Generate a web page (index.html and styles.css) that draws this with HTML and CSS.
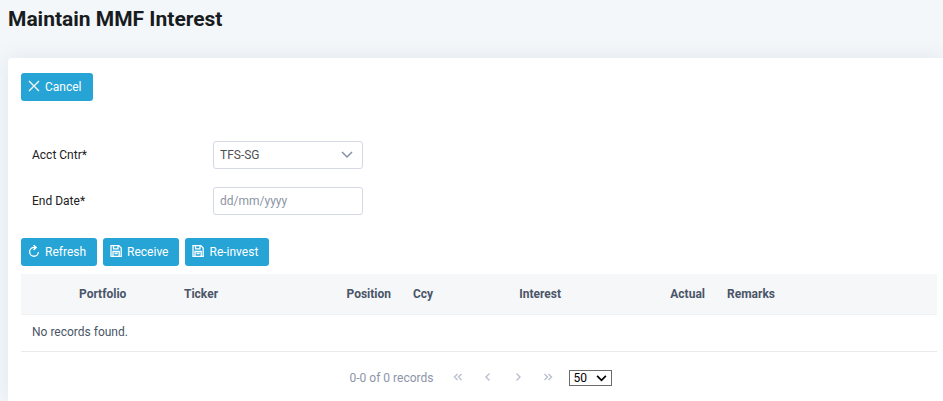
FILE: index.html
```html
<!DOCTYPE html>
<html lang="en">
<head>
<meta charset="UTF-8" />
<meta name="viewport" content="width=device-width, initial-scale=1" />
<title>Maintain MMF Interest</title>
<link rel="stylesheet" href="styles.css">
</head>
<body>
  <header class="page-header">
    <h1>Maintain MMF Interest</h1>
  </header>

  <main class="card">
    <div class="toolbar">
      <button type="button" class="btn">
        <svg class="icon" viewBox="0 0 12 12" aria-hidden="true"><path d="M1 1l10 10M11 1L1 11"/></svg>
        Cancel
      </button>
    </div>

    <form class="filters">
      <div class="field">
        <label for="acct-cntr">Acct Cntr*</label>
        <div class="select-wrap">
          <select id="acct-cntr" class="control">
            <option>TFS-SG</option>
          </select>
          <svg class="chevron" viewBox="0 0 12 8" aria-hidden="true"><path d="M1 1l5 5 5-5"/></svg>
        </div>
      </div>
      <div class="field">
        <label for="end-date">End Date*</label>
        <input type="text" id="end-date" class="control" placeholder="dd/mm/yyyy">
      </div>
    </form>

    <div class="toolbar">
      <button type="button" class="btn">
        <svg class="icon" viewBox="0 0 12 12" aria-hidden="true"><path d="M7.500 2.500H5.500A4.400 4.400 0 1 0 10.400 7M5.600 0L8.200 2.500 5.600 5"/></svg>
        Refresh
      </button>
      <button type="button" class="btn">
        <svg class="icon" viewBox="0 0 12 12" aria-hidden="true"><path d="M1 .6h7.800L11.200 3V11.400H1zM3.500 .6v3.200h4.500V.6M3 11.400V6.500h6.200v4.900M4.500 8.500h3.200"/></svg>
        Receive
      </button>
      <button type="button" class="btn">
        <svg class="icon" viewBox="0 0 12 12" aria-hidden="true"><path d="M1 .6h7.800L11.200 3V11.400H1zM3.500 .6v3.200h4.500V.6M3 11.400V6.500h6.200v4.900M4.500 8.500h3.200"/></svg>
        Re-invest
      </button>
    </div>

    <table class="records">
      <colgroup>
        <col class="col-check">
        <col class="col-portfolio">
        <col class="col-ticker">
        <col class="col-position">
        <col class="col-ccy">
        <col class="col-interest">
        <col class="col-actual">
        <col>
      </colgroup>
      <thead>
        <tr>
          <td></td>
          <th scope="col">Portfolio</th>
          <th scope="col">Ticker</th>
          <th scope="col" class="num">Position</th>
          <th scope="col">Ccy</th>
          <th scope="col" class="num">Interest</th>
          <th scope="col" class="num">Actual</th>
          <th scope="col">Remarks</th>
        </tr>
      </thead>
      <tbody>
        <tr>
          <td colspan="8">No records found.</td>
        </tr>
      </tbody>
    </table>

    <nav class="paginator" aria-label="Records pages">
      <span class="count">0-0 of 0 records</span>
      <button type="button" class="page-btn" aria-label="First page" disabled>
        <svg viewBox="0 0 10 8" aria-hidden="true"><path d="M4.500 1l-3 3 3 3M8.500 1l-3 3 3 3"/></svg>
      </button>
      <button type="button" class="page-btn" aria-label="Previous page" disabled>
        <svg viewBox="0 0 10 8" aria-hidden="true"><path d="M6.500 .5L3 4l3.500 3.500"/></svg>
      </button>
      <button type="button" class="page-btn" aria-label="Next page" disabled>
        <svg viewBox="0 0 10 8" aria-hidden="true"><path d="M3.500 .5L7 4 3.500 7.500"/></svg>
      </button>
      <button type="button" class="page-btn" aria-label="Last page" disabled>
        <svg viewBox="0 0 10 8" aria-hidden="true"><path d="M1.500 1l3 3-3 3M5.500 1l3 3-3 3"/></svg>
      </button>
      <div class="select-wrap page-size-wrap">
        <select class="page-size" aria-label="Rows per page">
          <option>50</option>
        </select>
        <svg class="chevron" viewBox="0 0 12 8" aria-hidden="true"><path d="M1 1l5 5 5-5"/></svg>
      </div>
    </nav>
  </main>
</body>
</html>
```

FILE: styles.css
```css
* {
  box-sizing: border-box;
}
body {
  margin: 0;
  display: flex;
  flex-direction: column;
  min-height: 100vh;
  font-family: Roboto, sans-serif;
  font-size: 12px;
  line-height: 16px;
  background: #f3f7fa;
  color: #212121;
}
.page-header {
  padding: 6px 8px 26px;
}
.page-header h1 {
  margin: 0;
  font-size: 21px;
  line-height: 26px;
  font-weight: 700;
  color: #181c21;
}
.card {
  flex-grow: 1;
  margin-left: 8px;
  padding: 15px 6px 14px 13px;
  background: #fff;
  border-top-left-radius: 4px;
  box-shadow: 0 0 20px rgba(69, 90, 120, 0.1);
}

/* Buttons */
.toolbar {
  display: flex;
  gap: 6px;
}
.btn {
  display: flex;
  align-items: center;
  gap: 5px;
  height: 28px;
  padding: 0 11px 0 7px;
  border: none;
  border-radius: 3px;
  background: #26a4d6;
  color: #fff;
  font: inherit;
  cursor: pointer;
}
.btn:hover {
  background: #1f93c2;
}
.icon {
  width: 12px;
  height: 12px;
  margin-bottom: 2px;
  stroke-width: 1.3;
}
svg {
  display: block;
  fill: none;
  stroke: currentColor;
}

/* Filter form */
.filters {
  display: flex;
  flex-direction: column;
  gap: 18px;
  padding: 40px 0 23px 11px;
}
.field {
  display: grid;
  grid-template-columns: 181px 150px;
  align-items: center;
}
.select-wrap {
  position: relative;
}
.control {
  display: block;
  width: 100%;
  height: 28px;
  padding: 0 6px;
  border: 1px solid #d5d9e4;
  border-radius: 3px;
  background: #fff;
  color: #4e5155;
  font: inherit;
  appearance: none;
}
.control::placeholder {
  color: #8c95a4;
  opacity: 1;
}
.chevron {
  position: absolute;
  top: 10px;
  right: 10px;
  width: 12px;
  height: 8px;
  color: #8592a6;
  stroke-width: 1.5;
  pointer-events: none;
}

/* Records table */
.records {
  width: 100%;
  margin-top: 8px;
  table-layout: fixed;
  border-collapse: collapse;
  color: #4a5568;
}
.records th,
.records td {
  padding: 9px 11px 11px;
  border-bottom: 1px solid #e8eaec;
  text-align: left;
}
.records thead th,
.records thead td {
  padding-top: 12px;
  padding-bottom: 12px;
  background: #f6f7f9;
  border-color: #eff1f3;
  font-weight: 700;
}
.records .num {
  text-align: right;
}
.col-check {
  width: 47px;
}
.col-portfolio {
  width: 105px;
}
.col-ticker {
  width: 115px;
}
.col-position {
  width: 114px;
}
.col-ccy {
  width: 56px;
}
.col-interest {
  width: 114px;
}
.col-actual {
  width: 144px;
}

/* Paginator */
.paginator {
  display: flex;
  align-items: center;
  justify-content: center;
  padding: 18px 0 0 4px;
  color: #8c95a8;
}
.count {
  margin-right: 10px;
}
.page-btn {
  display: flex;
  align-items: center;
  justify-content: center;
  width: 30px;
  height: 16px;
  padding: 0 0 2px;
  border: none;
  background: none;
  color: #b9bfcd;
}
.page-btn svg {
  width: 10px;
  height: 8px;
  stroke-width: 1.4;
}
.page-size-wrap {
  margin-left: 6px;
}
.page-size {
  display: block;
  width: 43px;
  height: 16px;
  padding: 0 3px;
  border: 1px solid #6b6b6b;
  border-radius: 0;
  background: #fff;
  color: #000;
  font: inherit;
  line-height: 14px;
  appearance: none;
}
.page-size-wrap .chevron {
  top: 5px;
  right: 5px;
  width: 11px;
  height: 7px;
  color: #000;
  stroke-width: 2;
}
```
